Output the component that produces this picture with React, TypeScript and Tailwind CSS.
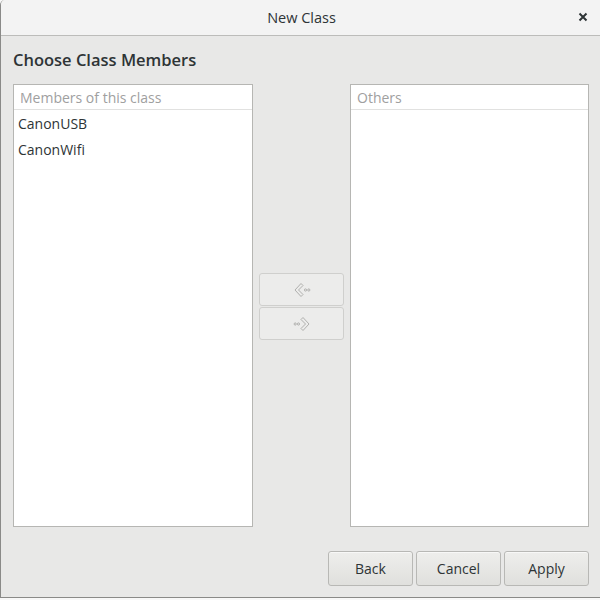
import React from 'react';

const font = { fontFamily: '"Open Sans", "Noto Sans", sans-serif' };

const ArrowLeft = () => (
  <svg width="20" height="20" viewBox="0 0 20 20" fill="none" stroke="#b0b0ae" strokeWidth="1">
    <path d="M9 3.5 L3 10 L9 16.5 L11 14.5 L6.5 10 L11 5.5 Z" strokeLinejoin="round" />
    <circle cx="13.5" cy="10" r="1.1" />
    <circle cx="16.8" cy="10" r="1.1" />
  </svg>
);

const ArrowRight = () => (
  <svg width="20" height="20" viewBox="0 0 20 20" fill="none" stroke="#b0b0ae" strokeWidth="1">
    <path d="M11 3.5 L17 10 L11 16.5 L9 14.5 L13.5 10 L9 5.5 Z" strokeLinejoin="round" />
    <circle cx="6.5" cy="10" r="1.1" />
    <circle cx="3.2" cy="10" r="1.1" />
  </svg>
);

const MemberList: React.FC<{ title: string; items: string[]; className?: string }> = ({ title, items, className }) => (
  <div className={`flex flex-col border border-[#b6b6b3] bg-white ${className ?? ''}`}>
    <div className="h-[25px] px-[6px] flex items-center border-b border-[#e1e1e0] text-[14px] font-medium text-[#a0a09f]">
      {title}
    </div>
    {items.map(item => (
      <div key={item} className="h-[26px] px-[4px] flex items-center text-[14px] text-[#2e3436]">
        {item}
      </div>
    ))}
  </div>
);

const DialogButton: React.FC<{ label: string }> = ({ label }) => (
  <button className="w-[85px] h-[35px] rounded-[3px] border border-[#b8b8b5] bg-gradient-to-b from-[#eeeeec] to-[#e0e0dd] text-[14px] text-[#2e3436] shadow-[inset_0_1px_0_#f8f8f7]">
    {label}
  </button>
);

export default function App() {
  return (
    <div className="w-[600px] h-[600px] bg-[#f8f8f8] overflow-hidden" style={font}>
      <div className="w-[602px] h-[598px] flex flex-col bg-[#e8e8e7] border-l border-b border-[#8a8a88] rounded-tl-[5px] overflow-hidden">
        <div className="h-[36px] shrink-0 relative flex items-center justify-center bg-[#f3f3f3] border-b border-[#bcbcba]">
          <span className="text-[14.5px] text-[#2e3436]">New Class</span>
          <span className="absolute right-[14px] top-[9px] text-[#2e3436]">
            <svg width="10" height="16" viewBox="0 0 10 16">
              <path d="M1.5 4.5 L8.5 11.5 M8.5 4.5 L1.5 11.5" stroke="#2e3436" strokeWidth="2" />
            </svg>
          </span>
        </div>
        <div className="flex-1 flex flex-col pl-[12px] pr-[13px]">
          <div className="h-[48px] flex items-center text-[16.5px] font-semibold text-[#2e3436]">
            Choose Class Members
          </div>
          <div className="flex h-[443px] gap-[6px]">
            <MemberList title="Members of this class" items={['CanonUSB', 'CanonWifi']} className="w-[240px]" />
            <div className="w-[85px] flex flex-col justify-center pt-[2px]">
              <div className="flex flex-col gap-[1px]">
                <button className="h-[33px] rounded-[3px] border border-[#cfcfcd] bg-[#ececeb] flex items-center justify-center">
                  <ArrowLeft />
                </button>
                <button className="h-[33px] rounded-[3px] border border-[#cfcfcd] bg-[#ececeb] flex items-center justify-center">
                  <ArrowRight />
                </button>
              </div>
            </div>
            <MemberList title="Others" items={[]} className="w-[239px]" />
          </div>
          <div className="flex justify-end gap-[3px] pt-[24px]">
            <DialogButton label="Back" />
            <DialogButton label="Cancel" />
            <DialogButton label="Apply" />
          </div>
        </div>
      </div>
    </div>
  );
}
